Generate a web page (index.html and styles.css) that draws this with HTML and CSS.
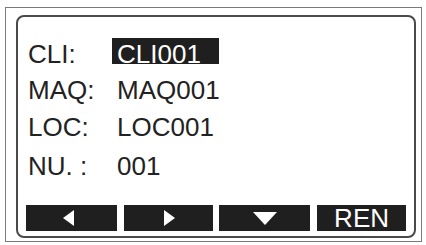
FILE: index.html
```html
<!DOCTYPE html>
<html>
<head>
<meta charset="utf-8">
<link rel="stylesheet" href="styles.css">
</head>
<body>
<div class="outer">
  <div class="inner">
    <div class="rows">
      <div class="row r1"><span class="label">CLI:</span><span class="value sel">CLI001</span></div>
      <div class="row r2"><span class="label">MAQ:</span><span class="value">MAQ001</span></div>
      <div class="row r3"><span class="label">LOC:</span><span class="value">LOC001</span></div>
      <div class="row r4"><span class="label">NU. :</span><span class="value">001</span></div>
    </div>
    <div class="keys">
      <div class="key"><svg class="tri-l" width="11" height="16" viewBox="0 0 11 16"><polygon points="11,0 11,16 0,8" fill="#fff"/></svg></div>
      <div class="key"><svg class="tri-r" width="11" height="16" viewBox="0 0 11 16"><polygon points="0,0 11,8 0,16" fill="#fff"/></svg></div>
      <div class="key"><svg class="tri-d" width="24" height="13" viewBox="0 0 24 13"><polygon points="0,0 24,0 12,13" fill="#fff"/></svg></div>
      <div class="key key-text">REN</div>
    </div>
  </div>
</div>
</body>
</html>
```
FILE: styles.css
```css
html, body {
  margin: 0;
  padding: 0;
  background: #fff;
}
.outer {
  box-sizing: border-box;
  margin: 7px 0 0 5px;
  width: 417px;
  height: 235px;
  border: 1px solid #7a7a7a;
  padding: 7px 5px 3px 10px;
  display: flex;
}
.inner {
  flex: 1;
  box-sizing: border-box;
  border: 2px solid #4a4a4a;
  border-radius: 8px;
  display: flex;
  flex-direction: column;
  padding: 0 8px 6px 8px;
  font-family: "Liberation Sans", Arial, sans-serif;
  color: #222;
}
.rows {
  padding-top: 19px;
}
.row {
  height: 36px;
  line-height: 36px;
  font-size: 26px;
  white-space: nowrap;
}
.r2 { height: 37px; }
.r3 { height: 39px; }
.label {
  display: inline-block;
  width: 84px;
  padding-left: 2px;
}
.value {
  display: inline-block;
  padding-left: 5px;
}
.value.sel {
  box-sizing: border-box;
  height: 26px;
  line-height: 20px;
  padding: 6px 18px 0 5px;
  background: #1f1f1f;
  color: #fff;
  vertical-align: baseline;
}
.keys {
  margin-top: auto;
  display: grid;
  grid-template-columns: 91px 89px 91px 89px;
  column-gap: 6.7px;
  height: 25px;
}
.key {
  background: #1f1f1f;
  display: flex;
  align-items: center;
  justify-content: center;
}
.tri-l { margin-left: -6px; }
.tri-r { margin-left: 3px; }
.key-text {
  color: #fff;
  font-size: 26px;
  line-height: 25px;
  padding-top: 1px;
}
```
